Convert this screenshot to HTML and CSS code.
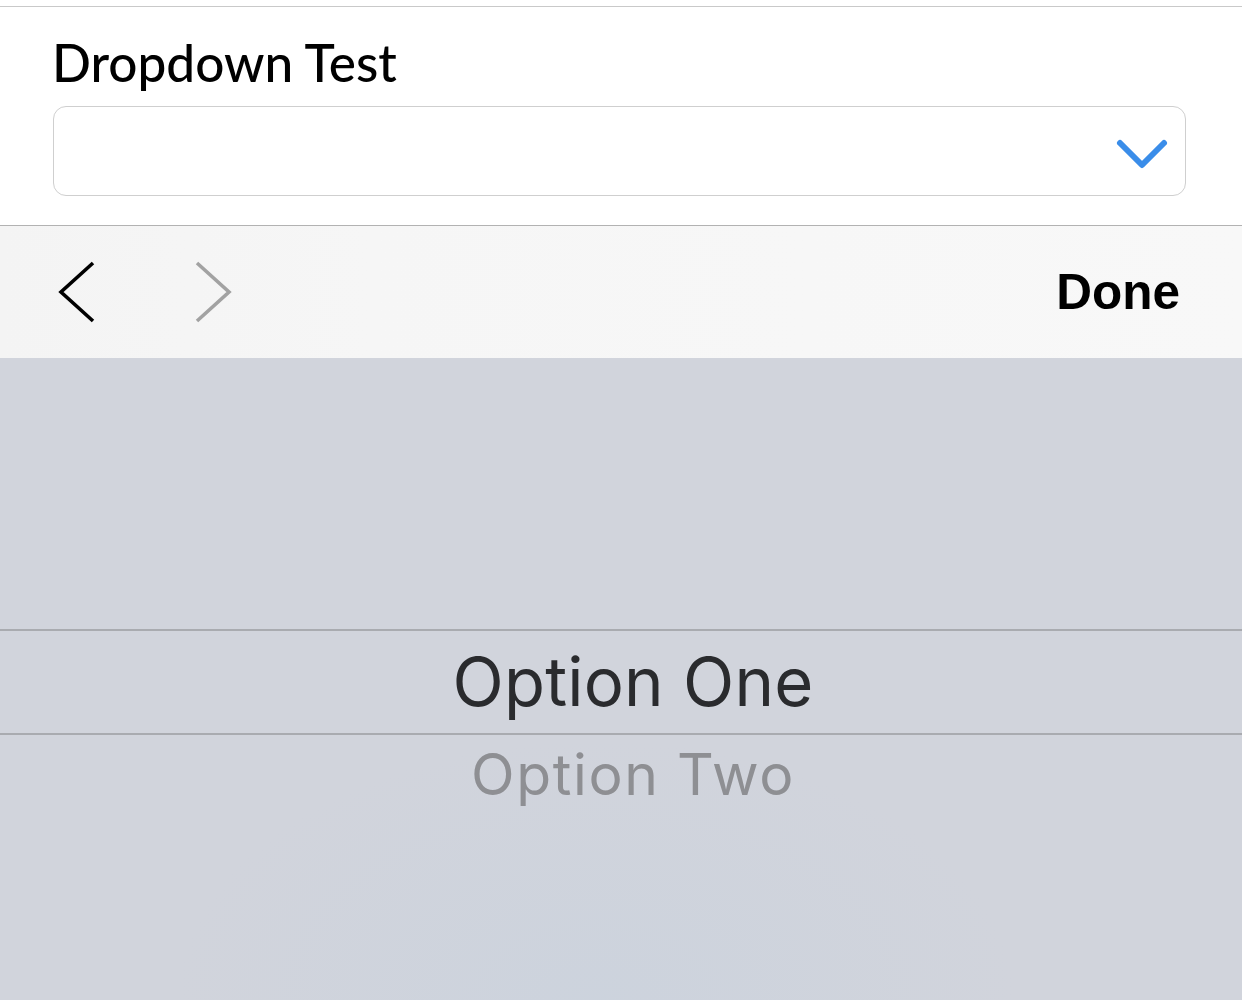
FILE: index.html
```html
<!DOCTYPE html>
<html lang="en">
<head>
<meta charset="utf-8">
<title>Dropdown Test</title>
<link rel="stylesheet" href="styles.css">
</head>
<body>
<section class="form">
  <div class="label">Dropdown Test</div>
  <div class="select">
    <svg class="select-chevron" width="56" height="34" viewBox="0 0 56 34">
      <polyline points="6,6 28,28 50,6" fill="none" stroke="#3a8de9" stroke-width="6" stroke-linecap="round" stroke-linejoin="round"/>
    </svg>
  </div>
</section>
<div class="toolbar">
  <div class="nav">
    <svg class="nav-btn" width="44" height="70" viewBox="0 0 44 70">
      <polyline points="37,6 5,35 37,64" fill="none" stroke="#000" stroke-width="3.6"/>
    </svg>
    <svg class="nav-btn" width="44" height="70" viewBox="0 0 44 70">
      <polyline points="7,6 39,35 7,64" fill="none" stroke="#a2a2a2" stroke-width="3.6"/>
    </svg>
  </div>
  <div class="done">Done</div>
</div>
<div class="picker">
  <div class="picker-spacer"></div>
  <div class="option selected">Option One</div>
  <div class="option next">Option Two</div>
</div>
</body>
</html>
```

FILE: styles.css
```css
html, body {
  margin: 0;
  padding: 0;
  background: #ffffff;
}

body {
  width: 1242px;
  height: 1000px;
  overflow: hidden;
  padding-top: 6px;
  box-sizing: border-box;
}

.form {
  border-top: 1px solid #c9c9c9;
  border-bottom: 1px solid #b2b2b2;
  padding: 22px 56px 29px 53px;
  background: #ffffff;
}

.label {
  font-family: Lato, "Open Sans", sans-serif;
  font-weight: 500;
  font-size: 51.3px;
  line-height: 66px;
  height: 66px;
  color: #000;
  margin-left: -1px;
}

.select {
  margin-top: 11px;
  height: 88px;
  border: 1px solid #cfcfcf;
  border-radius: 13px;
  display: flex;
  align-items: center;
  justify-content: flex-end;
  padding-right: 15px;
}

.select-chevron {
  display: block;
  margin-top: 6px;
}

.toolbar {
  height: 132px;
  background: linear-gradient(90deg, #f4f4f4 0%, #f6f6f6 30%, #f8f8f8 100%);
  display: flex;
  align-items: center;
  justify-content: space-between;
  padding: 0 62px 0 56px;
}

.nav {
  display: flex;
  gap: 90px;
  align-items: center;
}

.nav-btn {
  display: block;
}

.done {
  font-family: "Liberation Sans", Arial, sans-serif;
  font-weight: bold;
  font-size: 49.5px;
  color: #000;
  line-height: 56px;
}

.picker {
  height: 642px;
  background:
    radial-gradient(ellipse 420px 260px at 48% 100%, rgba(200, 210, 222, 0.5), rgba(200, 210, 222, 0) 100%),
    #d1d4dc;
  display: flex;
  flex-direction: column;
}

.picker-spacer {
  height: 271px;
  flex: none;
}

.option {
  font-family: Inter, Roboto, sans-serif;
  text-align: center;
  flex: none;
}

.selected {
  border-top: 2px solid #a9abb0;
  border-bottom: 2px solid #a9abb0;
  height: 102px;
  line-height: 102px;
  font-size: 67px;
  letter-spacing: 0.2px;
  color: #2a2b2e;
  padding-left: 24px;
}

.next {
  height: 80px;
  line-height: 80px;
  font-size: 57px;
  letter-spacing: 1.6px;
  color: #8e8f93;
  padding-left: 24px;
}
```
